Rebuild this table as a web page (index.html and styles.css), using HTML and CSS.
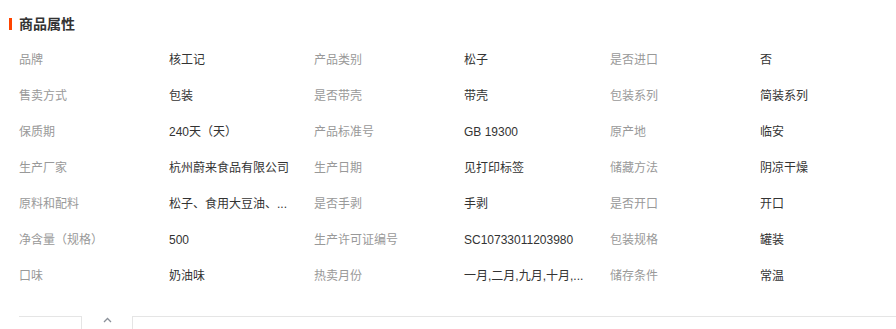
FILE: index.html
```html
<!DOCTYPE html>
<html lang="zh">
<head>
<meta charset="utf-8">
<link rel="stylesheet" href="styles.css">
</head>
<body>
<div class="panel">
  <h2 class="title">商品属性</h2>
  <div class="attrs">
    <div class="k">品牌</div><div class="v">核工记</div>
    <div class="k">产品类别</div><div class="v">松子</div>
    <div class="k">是否进口</div><div class="v">否</div>

    <div class="k">售卖方式</div><div class="v">包装</div>
    <div class="k">是否带壳</div><div class="v">带壳</div>
    <div class="k">包装系列</div><div class="v">简装系列</div>

    <div class="k">保质期</div><div class="v">240天（天）</div>
    <div class="k">产品标准号</div><div class="v">GB 19300</div>
    <div class="k">原产地</div><div class="v">临安</div>

    <div class="k">生产厂家</div><div class="v">杭州蔚来食品有限公司</div>
    <div class="k">生产日期</div><div class="v">见打印标签</div>
    <div class="k">储藏方法</div><div class="v">阴凉干燥</div>

    <div class="k">原料和配料</div><div class="v">松子、食用大豆油、...</div>
    <div class="k">是否手剥</div><div class="v">手剥</div>
    <div class="k">是否开口</div><div class="v">开口</div>

    <div class="k">净含量（规格）</div><div class="v">500</div>
    <div class="k">生产许可证编号</div><div class="v">SC10733011203980</div>
    <div class="k">包装规格</div><div class="v">罐装</div>

    <div class="k">口味</div><div class="v">奶油味</div>
    <div class="k">热卖月份</div><div class="v">一月,二月,九月,十月,...</div>
    <div class="k">储存条件</div><div class="v">常温</div>
  </div>
  <div class="foot">
    <div class="tab-left"></div>
    <div class="toggle"><svg width="9" height="6" viewBox="0 0 9 6"><polyline points="1,5 4.5,1.5 8,5" fill="none" stroke="#8a9099" stroke-width="1.3"/></svg></div>
    <div class="tab-right"></div>
  </div>
</div>
</body>
</html>
```
FILE: styles.css
```css
html, body {
  margin: 0;
  padding: 0;
  background: #fff;
}
body {
  font-family: "Liberation Sans", "Noto Sans CJK SC", sans-serif;
  font-size: 12px;
  color: #333;
  width: 896px;
  height: 329px;
  overflow: hidden;
}
.panel {
  padding-left: 19px;
}
.title {
  position: relative;
  margin: 0;
  padding-top: 14px;
  height: 28px;
  line-height: 20px;
  font-size: 14px;
  font-weight: bold;
  color: #333;
}
.title::before {
  content: "";
  position: absolute;
  left: -10px;
  top: 18px;
  width: 3px;
  height: 12px;
  background: #ff4400;
}
.attrs {
  display: grid;
  grid-template-columns: 150px 145px 150px 146px 150px 1fr;
  grid-auto-rows: 36px;
  align-items: center;
}
.k {
  color: #999;
  line-height: 16px;
}
.v {
  color: #333;
  line-height: 16px;
  white-space: nowrap;
}
.foot {
  display: flex;
  margin-top: 22px;
  height: 20px;
}
.tab-left {
  width: 62px;
  border-top: 1px solid #e5e5e5;
  border-right: 1px solid #e5e5e5;
}
.toggle {
  width: 50px;
  display: flex;
  justify-content: center;
  padding-top: 1px;
}
.toggle svg {
  display: block;
}
.tab-right {
  flex: 1;
  border-top: 1px solid #e5e5e5;
  border-left: 1px solid #e5e5e5;
}
```
